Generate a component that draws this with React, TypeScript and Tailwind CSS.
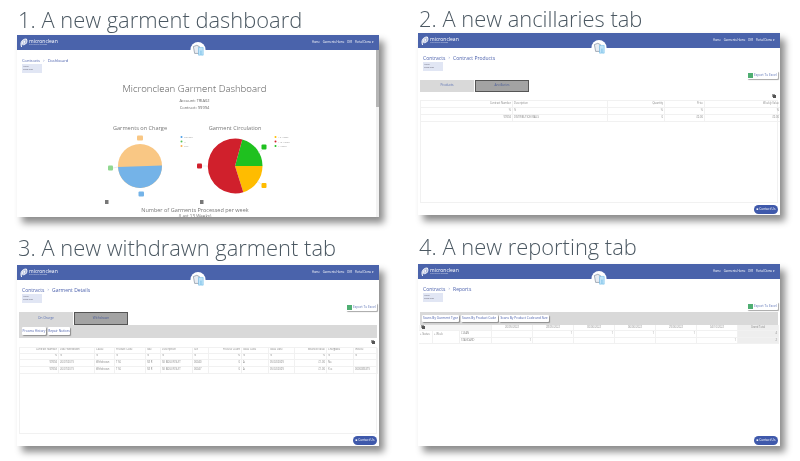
import type { ReactNode } from 'react';

const sans = 'font-["Open_Sans",sans-serif]';

const Crest = () => (
  <div className="absolute left-1/2 top-[7px] flex h-[15px] w-[15px] -translate-x-1/2 items-center justify-center rounded-full bg-white">
    <svg viewBox="0 0 14 14" className="h-[12px] w-[12px]">
      <path d="M1 3 L5 1.500 L8 3 L7.500 11 L2.500 11 Z" fill="#e8ecf2" stroke="#5f6d80" strokeWidth="0.6" />
      <path d="M7 4 H12.500 V13 H10.200 V8 H9.500 V13 H7 Z" fill="#bfe3f7" stroke="#62b5e5" strokeWidth="0.6" />
    </svg>
  </div>
);

const NavBar = () => (
  <div className="relative flex h-[15px] shrink-0 items-center justify-between bg-[#4a63ab] pl-[3px] pr-[5px] text-white">
    <div className="flex items-center gap-[1px]">
      <svg viewBox="0 0 10 12" className="h-[10px] w-[8px]">
        <path d="M2 11 C0 6 2 1 8 1 C10 5 7 9 3 8 M4 3 L3 7 M6 3 L5 7" fill="#ffffff88" stroke="#fff" strokeWidth="1.200" />
      </svg>
      <div className="flex flex-col leading-none">
        <span className="text-[5px]">micronclean</span>
        <span className="text-[1.500px] opacity-70">textile rental &amp; cleanroom</span>
      </div>
    </div>
    <div className="flex gap-[3px] text-[2.800px]">
      <span>Home</span>
      <span>Garments Home</span>
      <span>DIR</span>
      <span>Portal Demo ▾</span>
    </div>
    <Crest />
  </div>
);

const Crumbs = ({ page, large = true }: { page: string; large?: boolean }) => (
  <div className={large ? 'pl-[5px] pt-[8px]' : 'pl-[5px] pt-[9px]'}>
    <div className={`flex items-center gap-[3px] leading-none text-[#4d62ad] ${large ? 'text-[5px]' : 'text-[4px]'}`}>
      <span>Contracts</span>
      <span className="text-[3px]">&gt;</span>
      <span>{page}</span>
    </div>
    <div className="mt-[1px] flex h-[9px] w-[20px] flex-col justify-center bg-[#e1e6f4] pl-[1px] text-[2px] leading-[2.500px] text-[#667]">
      <span>MISSC</span>
      <span>Portal Test</span>
    </div>
  </div>
);

const ExportButton = () => (
  <div className="flex h-[8px] w-[31px] items-center gap-[1px] rounded-[1px] bg-white px-[1px] text-[3.200px] text-[#5a71b5] shadow-[1px_1px_1px_rgba(0,0,0,0.35)]">
    <span className="h-[5px] w-[5px] shrink-0 bg-[#4fae72]" />
    <span className="whitespace-nowrap">Export To Excel</span>
  </div>
);

const Tabs = ({ first, second }: { first: string; second: string }) => (
  <div className="flex gap-[1px] pl-[2px] text-[3.200px] text-[#5a71b5]">
    <div className="flex h-[12.500px] w-[54px] items-center justify-center bg-[#d9d9d9]">{first}</div>
    <div className="flex h-[12.500px] w-[54px] items-center justify-center border-[1.500px] border-[#555] bg-[#a3a3a3] text-[#4d5f9a]">{second}</div>
  </div>
);

const SmallButton = ({ label, width }: { label: string; width: string }) => (
  <div className={`flex h-[7.500px] items-center justify-center rounded-[1px] bg-white text-[3.200px] whitespace-nowrap text-[#4d62ad] shadow-[1px_1px_1px_rgba(0,0,0,0.35)] ${width}`}>
    {label}
  </div>
);

const ContactUs = () => (
  <div className="flex h-[9px] w-[24px] items-center justify-center rounded-full bg-[#3f59ab] text-[3.200px] whitespace-nowrap text-white">
    ■ Contact Us
  </div>
);

const CopyIcon = () => <span className="block h-[3px] w-[3px] bg-[#555] shadow-[-1px_-1px_0_#999]" />;

const Cell = ({ children, right, className = '' }: { children?: ReactNode; right?: boolean; className?: string }) => (
  <div className={`flex min-w-0 items-center overflow-hidden border-r border-b border-[#f1f1f1] px-[1px] text-[2.600px] whitespace-nowrap text-[#888] ${right ? 'justify-end' : ''} ${className}`}>
    {children}
  </div>
);

const Rows = ({ cols, right, rows, height }: { cols: string; right: number[]; rows: string[][]; height: string }) => (
  <div className={`grid ${cols} ${height}`}>
    {rows.flatMap((row, r) =>
      row.map((text, c) => (
        <Cell key={`${r}-${c}`} right={right.includes(c)}>
          {text}
        </Cell>
      )),
    )}
  </div>
);

const Card = ({ children, className = '' }: { children: ReactNode; className?: string }) => (
  <div className={`flex w-[362px] flex-col overflow-hidden bg-white shadow-[5px_6px_7px_rgba(0,0,0,0.45)] ${className}`}>
    <NavBar />
    {children}
  </div>
);

const Heading = ({ children, className }: { children: ReactNode; className: string }) => (
  <h2 className={`pl-[1px] text-[21.900px] leading-[30px] font-light whitespace-nowrap text-[#4b5862] ${className}`}>{children}</h2>
);

const Footer = () => (
  <div className="flex h-[12px] justify-end pr-[2px] pt-[1.500px]">
    <ContactUs />
  </div>
);

const Dashboard = () => (
  <div className="flex min-h-0 flex-1">
    <div className="min-w-0 flex-1 overflow-hidden">
      <Crumbs page="Dashboard" large={false} />
      <div className="flex flex-col items-center pr-[4px] pt-[9px] text-[#666]">
        <div className="text-[9.600px] leading-[13px] font-light text-[#555]">Micronclean Garment Dashboard</div>
        <div className="mt-[2px] text-[4px] leading-[7px]">Account: TRIA02</div>
        <div className="text-[4px] leading-[7px]">Contract: 99994</div>
      </div>
      <svg viewBox="17 122 359 85" className="mt-[11px] block h-[85px] w-[359px]">
        <text x="140" y="130" textAnchor="middle" fontSize="5.600" fill="#777">Garments on Charge</text>
        <text x="235" y="130" textAnchor="middle" fontSize="5.600" fill="#777">Garment Circulation</text>
        <circle cx="140" cy="166" r="22" fill="#f9c784" />
        <path d="M118.020 167 A22 22 0 0 0 161.990 165.500 Z" fill="#74b3e8" />
        <path d="M235 166 L242.300 139.400 A27.500 27.500 0 0 1 262.500 166 Z" fill="#1fc11f" />
        <path d="M235 166 L262.500 166 A27.500 27.500 0 0 1 243.300 192.300 Z" fill="#ffbc00" />
        <path d="M235 166 L243.300 192.300 A27.500 27.500 0 1 1 242.300 139.400 Z" fill="#d0202c" />
        <rect x="137" y="135.500" width="6" height="5" rx="1" fill="#f9c784" />
        <rect x="108" y="165.500" width="5" height="5" rx="1" fill="#90d890" />
        <rect x="138.500" y="191.500" width="5.500" height="5" rx="1" fill="#74b3e8" />
        <rect x="261.500" y="144.500" width="5" height="5" rx="1" fill="#1fc11f" />
        <rect x="197" y="163.500" width="5" height="5" rx="1" fill="#d0202c" />
        <rect x="261.500" y="183" width="5" height="5" rx="1" fill="#ffbc00" />
        <path d="M113 168 L118 167 M262 150 L258 153 M202 166 L207 166 M261 184 L257 181" stroke="#ccc" strokeWidth="0.400" />
        <rect x="105" y="200" width="3.500" height="4" fill="#777" />
        <rect x="200" y="200" width="3.500" height="4" fill="#777" />
        <circle cx="181.500" cy="137" r="1" fill="#4b9fe8" />
        <circle cx="181.500" cy="141.500" r="1" fill="#55c255" />
        <circle cx="181.500" cy="146" r="1" fill="#f9b04e" />
        <g fontSize="2.200" fill="#999">
          <text x="184" y="138">Certified</text>
          <text x="184" y="142.500">W</text>
          <text x="184" y="147">Chill</text>
          <text x="278" y="138">&lt; 8 Weeks</text>
          <text x="278" y="142.500">&gt; 13 Weeks</text>
          <text x="278" y="147">4 Weeks</text>
        </g>
        <circle cx="275.500" cy="137" r="1" fill="#ffbc00" />
        <circle cx="275.500" cy="141.500" r="1" fill="#d0202c" />
        <circle cx="275.500" cy="146" r="1" fill="#1fc11f" />
      </svg>
      <div className="mt-[1px] flex flex-col items-center pr-[3px] text-[5.500px] leading-[5.500px] text-[#777]">
        <span>Number of Garments Processed per week</span>
        <span className="text-[4.500px]">(Last 13 Weeks)</span>
      </div>
    </div>
    <div className="w-[3px] shrink-0 bg-[#f2f2f2]">
      <div className="h-[57px] bg-[#b5b5b5]" />
    </div>
  </div>
);

const Ancillaries = () => {
  const cols = 'grid-cols-[92px_95px_57px_40px_76px]';
  return (
    <div className="flex min-h-0 flex-1 flex-col">
      <Crumbs page="Contract Products" />
      <div className="flex justify-end pr-[2px]">
        <ExportButton />
      </div>
      <div className="h-[0.500px]" />
      <Tabs first="Products" second="Ancillaries" />
      <div className="flex h-[8px] shrink-0 items-center justify-end pr-[4px]">
        <CopyIcon />
      </div>
      <div className="mx-[2px] flex-1 border border-[#f1f1f1]">
        <Rows
          cols={cols}
          right={[0, 2, 3, 4]}
          height="auto-rows-[7px]"
          rows={[
            ['Contract Number', 'Description', 'Quantity', 'Price', 'Weekly Value'],
            ['%', '%', '%', '%', '%'],
            ['99994', 'DISTRIBUTION RAILS', '0', '£0.00', '£0.00'],
          ]}
        />
      </div>
      <Footer />
    </div>
  );
};

const Withdrawn = () => {
  const cols = 'grid-cols-[39px_36px_20px_31px_15px_32px_16px_33px_27px_26px_32px_27px_24px]';
  const filter = ['%', '%', '%', '%', '%', '%', '%', '%', '%', '%', '%', '%', '%'];
  return (
    <div className="flex min-h-0 flex-1 flex-col">
      <Crumbs page="Garment Details" />
      <div className="flex justify-end pr-[2px]">
        <ExportButton />
      </div>
      <div className="h-[1px]" />
      <Tabs first="On Charge" second="Withdrawn" />
      <div className="mx-[2px] flex h-[13px] shrink-0 items-center gap-[2px] bg-[#d9d9d9] pl-[3px]">
        <SmallButton label="Process History" width="w-[24px]" />
        <SmallButton label="Repair Notices" width="w-[22px]" />
      </div>
      <div className="flex h-[9px] shrink-0 items-center justify-end pr-[4px]">
        <CopyIcon />
      </div>
      <div className="mx-[2px] flex-1 border border-[#f1f1f1]">
        <Rows
          cols={cols}
          right={[0, 7, 10]}
          height="grid-rows-[6px_6px_7px_7px]"
          rows={[
            ['Contract Number', 'Date Withdrawn', 'Cause', 'Product Code', 'Size', 'Description', 'Set', 'Process Count', 'Issue Code', 'Issue Date', 'Washed Value', 'Chargable', 'Invoice'],
            filter,
            ['99994', '26/07/2019', 'Withdrawn', 'T 56', '58 R', 'SK BOILER SUIT', '00040', '0', 'A', '05/02/2009', '£1.00', 'No', ''],
            ['99994', '26/07/2019', 'Withdrawn', 'T 56', '58 R', 'SK BOILER SUIT', '00047', '0', 'A', '05/02/2009', '£1.00', 'Yes', '0000086379'],
          ]}
        />
      </div>
      <Footer />
    </div>
  );
};

const Reporting = () => {
  const cols = 'grid-cols-[14px_27px_32px_41px_41px_41px_41px_41px_41px_41px]';
  return (
    <div className="flex min-h-0 flex-1 flex-col">
      <Crumbs page="Reports" />
      <div className="flex justify-end pr-[2px]">
        <ExportButton />
      </div>
      <div className="mx-[2px] mt-[2px] flex h-[13px] shrink-0 items-center gap-[1.500px] bg-[#d9d9d9] pl-[2px]">
        <SmallButton label="Scans By Garment Type" width="w-[37px]" />
        <SmallButton label="Scans By Product Code" width="w-[37px]" />
        <SmallButton label="Scans By Product Code and Size" width="w-[50px]" />
      </div>
      <div className="ml-[1px] mr-[2px] flex-1">
        <div className={`grid grid-rows-[6px_7px_6px] ${cols}`}>
          <Cell className="col-span-3 bg-[#f6f6f6] pl-[3px]">
            <CopyIcon />
          </Cell>
          {['26/05/2022', '28/05/2022', '30/06/2022', '06/06/2022', '29/06/2022', '04/10/2022'].map((d) => (
            <Cell key={d} className="justify-center">{d}</Cell>
          ))}
          <Cell className="justify-center bg-[#eeeeee]">Grand Total</Cell>

          <Cell className="row-span-2 items-start pt-[1.500px]">+ Status</Cell>
          <Cell className="row-span-2 items-start pt-[1.500px]">+ Week</Cell>
          <Cell>CLEAN</Cell>
          <Cell />
          <Cell right>1</Cell>
          <Cell right>1</Cell>
          <Cell right>1</Cell>
          <Cell right>1</Cell>
          <Cell />
          <Cell right className="bg-[#eeeeee]">4</Cell>

          <Cell>STANDARD</Cell>
          <Cell right>1</Cell>
          <Cell />
          <Cell />
          <Cell />
          <Cell />
          <Cell right>1</Cell>
          <Cell right className="bg-[#eeeeee]">2</Cell>
        </div>
      </div>
      <Footer />
    </div>
  );
};

const App = () => (
  <div className={`h-[461px] w-[800px] overflow-hidden bg-white pl-[17px] blur-[0.5px] ${sans}`}>
    <div className="grid grid-cols-[401px_362px] grid-rows-[240px_221px]">
      <div className="pt-[5px]">
        <Heading className="h-[30px]">1. A new garment dashboard</Heading>
        <Card className="h-[182px]">
          <Dashboard />
        </Card>
      </div>
      <div className="pt-[4px]">
        <Heading className="h-[29px]">2. A new ancillaries tab</Heading>
        <Card className="h-[182px]">
          <Ancillaries />
        </Card>
      </div>
      <div className="-mt-[7px]">
        <Heading className="h-[32px]">3. A new withdrawn garment tab</Heading>
        <Card className="h-[181px]">
          <Withdrawn />
        </Card>
      </div>
      <div className="-mt-[8px]">
        <Heading className="h-[32px]">4. A new reporting tab</Heading>
        <Card className="h-[182px]">
          <Reporting />
        </Card>
      </div>
    </div>
  </div>
);

export default App;
